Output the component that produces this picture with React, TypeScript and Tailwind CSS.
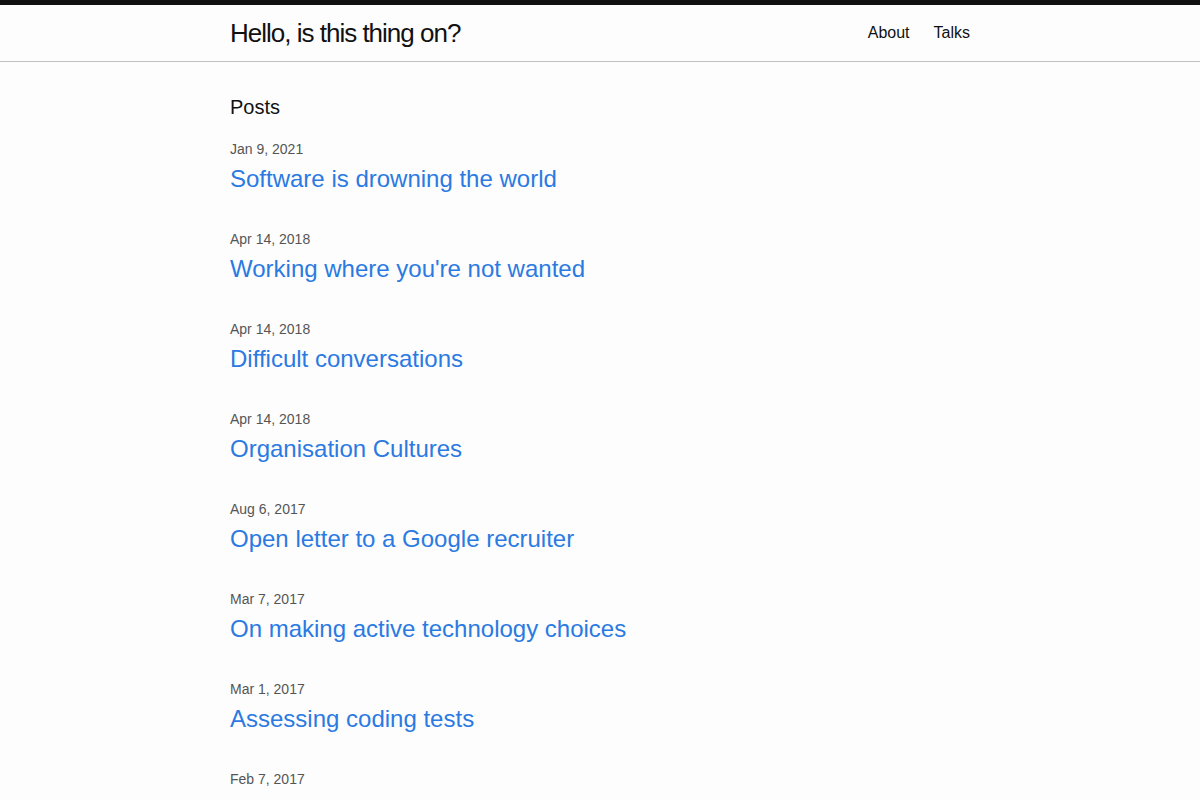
const posts = [
  { date: 'Jan 9, 2021', title: 'Software is drowning the world' },
  { date: 'Apr 14, 2018', title: "Working where you're not wanted" },
  { date: 'Apr 14, 2018', title: 'Difficult conversations' },
  { date: 'Apr 14, 2018', title: 'Organisation Cultures' },
  { date: 'Aug 6, 2017', title: 'Open letter to a Google recruiter' },
  { date: 'Mar 7, 2017', title: 'On making active technology choices' },
  { date: 'Mar 1, 2017', title: 'Assessing coding tests' },
  { date: 'Feb 7, 2017', title: '' },
];

const App = () => {
  return (
    <div className="min-h-screen bg-[#fdfdfd] text-[#111] font-['Liberation_Sans',Arial,sans-serif] text-base leading-normal">
      <header className="border-t-[5px] border-t-[#111] border-b border-b-[#c0c0c0]">
        <div className="mx-auto w-[740px] flex justify-between items-center h-14">
          <a href="#" className="text-[26px] tracking-[-1px] leading-[56px] text-[#111]">
            Hello, is this thing on?
          </a>
          <nav className="flex gap-6 leading-[56px]">
            <a href="#" className="text-[#111]">About</a>
            <a href="#" className="text-[#111]">Talks</a>
          </nav>
        </div>
      </header>
      <main className="mx-auto w-[740px] pt-[30px]">
        <h1 className="text-[20px] leading-[30px] mb-[15px]">Posts</h1>
        <ul className="flex flex-col gap-[30px]">
          {posts.map((p, i) => (
            <li key={i}>
              <span className="block text-sm leading-6 text-[#555]">{p.date}</span>
              {p.title && (
                <h3 className="text-2xl leading-9">
                  <a href="#" className="text-[#2a7ae2]">{p.title}</a>
                </h3>
              )}
            </li>
          ))}
        </ul>
      </main>
    </div>
  );
};

export default App;
